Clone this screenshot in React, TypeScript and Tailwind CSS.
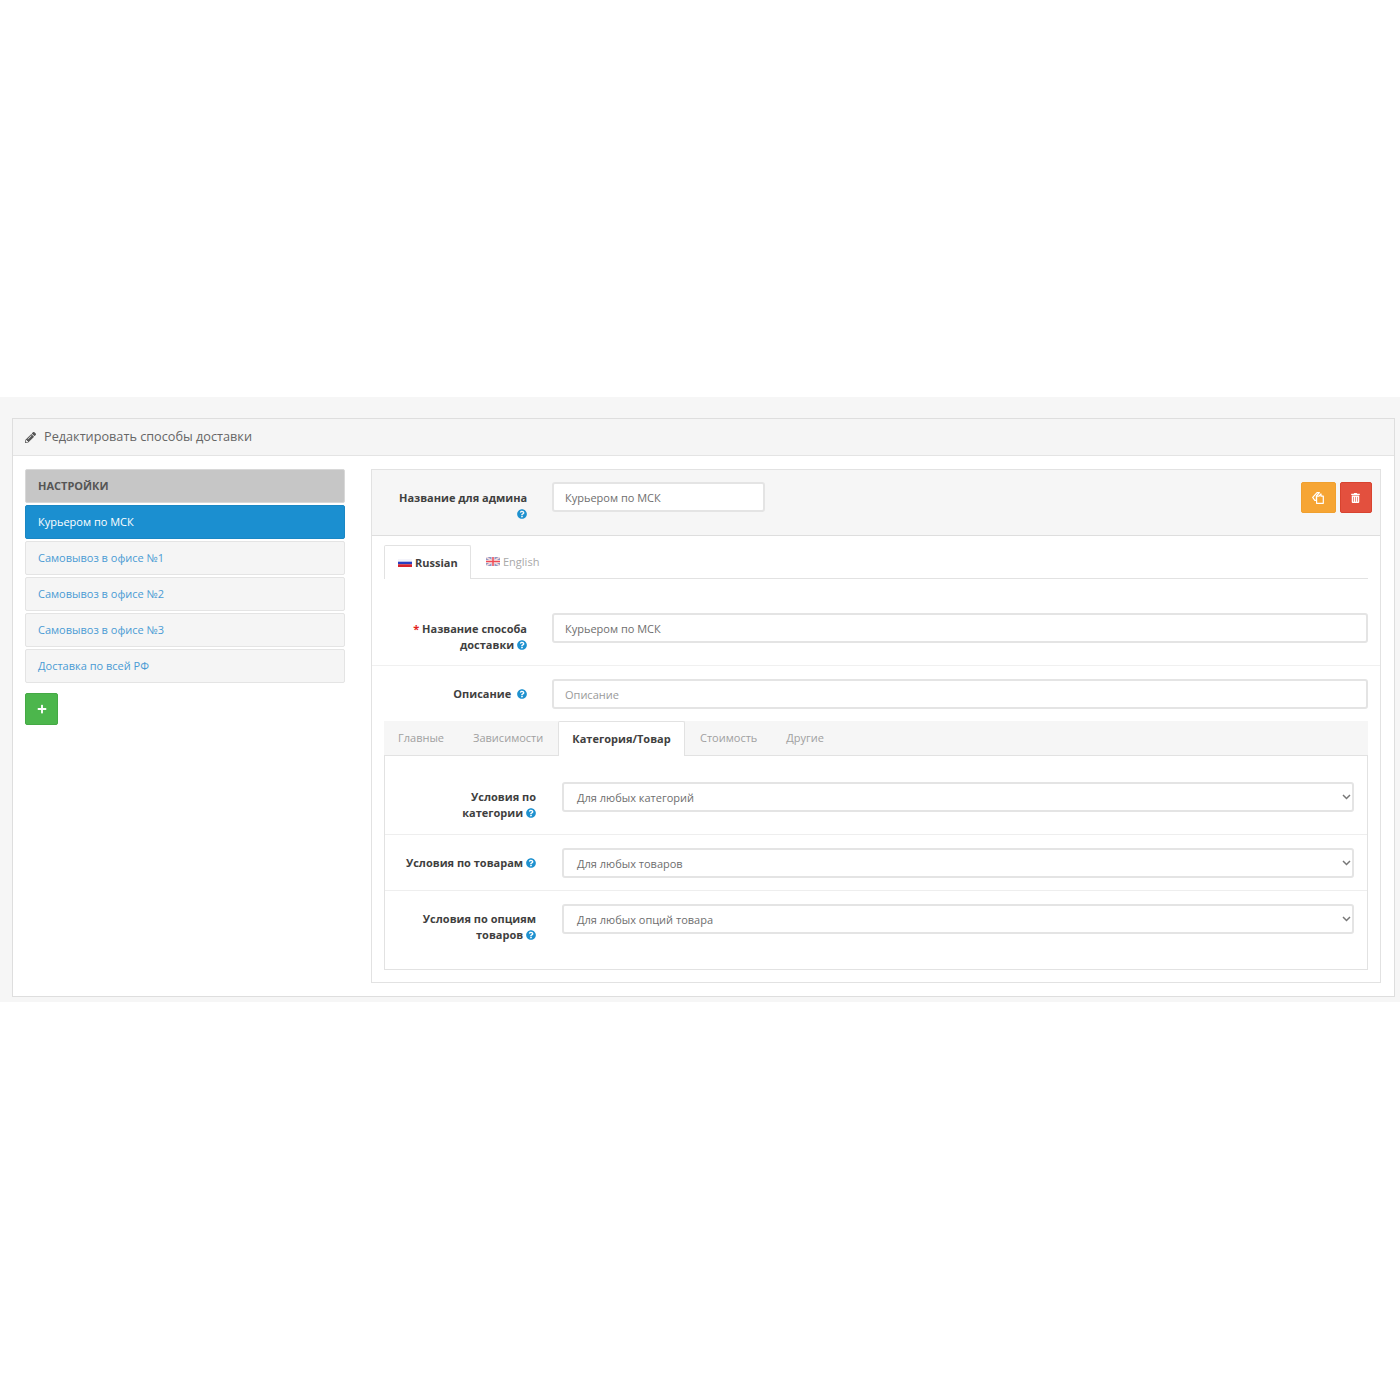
import React from "react";
import { FaPencilAlt, FaQuestionCircle, FaPlus, FaTrashAlt } from "react-icons/fa";

const font = "[font-family:'Open_Sans',sans-serif]";

function Help({ className = "" }: { className?: string }) {
  return <FaQuestionCircle className={`inline-block w-[10px] h-[10px] text-[#1e91cf] align-[-1px] ${className}`} />;
}

function RuFlag() {
  return (
    <svg width="14" height="8" viewBox="0 0 14 8" className="inline-block">
      <rect width="14" height="2.7" fill="#f4f4fa" />
      <rect y="2.7" width="14" height="2.6" fill="#2a3fc0" />
      <rect y="5.3" width="14" height="2.7" fill="#d8232a" />
    </svg>
  );
}

function GbFlag() {
  return (
    <svg width="14" height="9" viewBox="0 0 14 9" className="inline-block">
      <rect width="14" height="9" fill="#8d96c6" />
      <path d="M0 0L14 9M14 0L0 9" stroke="#f3dada" strokeWidth="1.6" />
      <path d="M7 0V9M0 4.5H14" stroke="#f6eeee" strokeWidth="3" />
      <path d="M7 0V9M0 4.5H14" stroke="#ee4a55" strokeWidth="1.5" />
    </svg>
  );
}

function CopyIcon() {
  return (
    <svg width="12" height="12" viewBox="0 0 12 12" fill="none" stroke="#fff" strokeWidth="1.2" strokeLinejoin="round">
      <path d="M0.7 5.4L5 0.7H7.4L4.4 4V8.4H2.8Z" />
      <path d="M4.6 4.2H7L9 1.9V4.2H11.3V11.3H4.6Z" />
    </svg>
  );
}

function SideItem({ children, active }: { children: React.ReactNode; active?: boolean }) {
  return (
    <div
      className={
        active
          ? "h-[34px] flex items-center pl-[12px] text-[11px] text-white bg-[#1b8fd0] border border-[#1a87c4] rounded-[2px]"
          : "h-[34px] flex items-center pl-[12px] text-[11px] text-[#4a9bd4] bg-[#f5f5f5] border border-[#e4e4e4] rounded-[2px]"
      }
    >
      {children}
    </div>
  );
}

function TextInput({ value, placeholder, className = "" }: { value?: string; placeholder?: string; className?: string }) {
  return (
    <input
      readOnly
      value={value ?? ""}
      placeholder={placeholder}
      className={`h-[30px] border-2 border-[#e4e4e4] rounded-[3px] bg-white pl-[11px] text-[11px] text-[#6e6e6e] placeholder:text-[#9a9a9a] outline-none ${className}`}
    />
  );
}

function Label({ children, width }: { children: React.ReactNode; width: string }) {
  return <div className={`${width} shrink-0 text-right text-[11px] leading-[16px] font-bold text-[#3f3f3f]`}>{children}</div>;
}

function SelectRow({ label, value, className = "" }: { label: React.ReactNode; value: string; className?: string }) {
  return (
    <div className={`flex items-start pl-[14px] pr-[13px] ${className}`}>
      <Label width="w-[137px]">{label}</Label>
      <div className="ml-[26px] flex-1 relative h-[30px]">
        <div className="h-[30px] border-2 border-[#e4e4e4] rounded-[3px] bg-white pl-[13px] pt-[2px] flex items-center text-[11px] text-[#6e6e6e]">
          {value}
        </div>
        <svg width="9" height="6" viewBox="0 0 9 6" className="absolute right-[3px] top-[12px]" fill="none" stroke="#777" strokeWidth="1.5">
          <path d="M1 1l3.5 3.5L8 1" />
        </svg>
      </div>
    </div>
  );
}

export default function App() {
  return (
    <div className={`min-h-[1400px] bg-white pt-[397px] ${font}`}>
      <div className="bg-[#f6f6f6] pt-[21px] pb-[5px] pl-[12px] pr-[5px]">
        <div className="border border-[#dedede] bg-white">
          <div className="h-[37px] bg-[#f5f5f5] border-b border-[#e4e4e4] flex items-center pl-[12px] text-[12.7px] text-[#666]">
            <FaPencilAlt className="w-[11px] h-[11px] text-[#555] mr-[8px]" />
            <span>Редактировать способы доставки</span>
          </div>
          <div className="flex items-start pt-[13px] pb-[13px] pl-[12px] pr-[13px]">
            <div className="w-[320px] shrink-0 mr-[26px] flex flex-col">
              <div className="h-[34px] flex items-center pl-[12px] mb-[2px] text-[11px] font-bold text-[#555] bg-[#c6c6c6] border border-[#d8d8d8] rounded-[2px]">
                НАСТРОЙКИ
              </div>
              <div className="flex flex-col gap-[2px]">
                <SideItem active>Курьером по МСК</SideItem>
                <SideItem>Самовывоз в офисе №1</SideItem>
                <SideItem>Самовывоз в офисе №2</SideItem>
                <SideItem>Самовывоз в офисе №3</SideItem>
                <SideItem>Доставка по всей РФ</SideItem>
              </div>
              <button className="mt-[10px] w-[33px] h-[32px] bg-[#4cb64c] border border-[#45a945] rounded-[2px] flex items-center justify-center">
                <FaPlus className="w-[10px] h-[10px] text-white" />
              </button>
            </div>

            <div className="flex-1 border border-[#e2e2e2] pb-[12px]">
              <div className="h-[66px] bg-[#f6f6f6] border-b border-[#dedede] flex items-start pl-[27px] pr-[8px] pt-[12px]">
                <Label width="w-[128px] pt-[8px] whitespace-nowrap">
                  Название для админа
                  <br />
                  <Help />
                </Label>
                <TextInput value="Курьером по МСК" className="ml-[25px] w-[213px]" />
                <div className="ml-auto flex gap-[4px]">
                  <button className="w-[35px] h-[31px] bg-[#f6a534] border border-[#f0a02f] rounded-[2px] flex items-center justify-center pr-[2px]">
                    <CopyIcon />
                  </button>
                  <button className="w-[32px] h-[31px] bg-[#e3503e] border border-[#d8432f] rounded-[2px] flex items-center justify-center pr-[2px]">
                    <FaTrashAlt className="w-[9px] h-[10px] text-white" />
                  </button>
                </div>
              </div>

              <div className="mt-[9px] ml-[12px] mr-[12px] h-[34px] border-b border-[#e2e2e2] flex items-stretch text-[11px]">
                <div className="w-[87px] h-[34px] border border-b-0 border-[#e2e2e2] bg-white rounded-t-[2px] flex items-center pl-[13px] font-bold text-[#3f3f3f]">
                  <RuFlag />
                  <span className="ml-[3px] pt-[1px]">Russian</span>
                </div>
                <div className="flex items-center pl-[15px] text-[#a8a8a8]">
                  <GbFlag />
                  <span className="ml-[3px] pt-[2px]">English</span>
                </div>
              </div>

              <div className="mt-[34px] flex items-start pl-[27px] pr-[12px] pb-[12px] border-b border-[#f0f0f0]">
                <Label width="w-[128px] pt-[8px]">
                  <span className="text-[#e3211c]">* </span>Название способа
                  <br />
                  доставки <Help />
                </Label>
                <TextInput value="Курьером по МСК" className="ml-[25px] flex-1" />
              </div>

              <div className="mt-[13px] flex items-center pl-[27px] pr-[12px]">
                <Label width="w-[128px]">
                  Описание <Help className="ml-[3px]" />
                </Label>
                <TextInput placeholder="Описание" className="ml-[25px] flex-1" />
              </div>

              <div className="mt-[12px] ml-[12px] mr-[12px]">
                <div className="h-[35px] bg-[#f6f6f6] border-b border-[#e2e2e2] flex items-stretch text-[11px] text-[#a0a0a0]">
                  <div className="flex items-center pl-[14px] w-[174px]">
                    <span>Главные</span>
                    <span className="ml-[29px]">Зависимости</span>
                  </div>
                  <div className="w-[127px] h-[35px] bg-white border border-b-0 border-[#e2e2e2] rounded-t-[2px] flex items-center justify-center font-bold text-[#3f3f3f]">
                    Категория/Товар
                  </div>
                  <div className="flex items-center pl-[15px]">
                    <span>Стоимость</span>
                    <span className="ml-[29px]">Другие</span>
                  </div>
                </div>
                <div className="h-[214px] border border-t-0 border-[#e2e2e2] flex flex-col">
                  <SelectRow
                    className="pt-[26px] h-[79px] shrink-0 border-b border-[#eeeeee]"
                    label={
                      <>
                        <span className="block pt-[7px]">Условия по</span>
                        категории <Help />
                      </>
                    }
                    value="Для любых категорий"
                  />
                  <SelectRow
                    className="pt-[13px] h-[56px] shrink-0 border-b border-[#eeeeee]"
                    label={
                      <span className="block pt-[7px]">
                        Условия по товарам <Help />
                      </span>
                    }
                    value="Для любых товаров"
                  />
                  <SelectRow
                    className="pt-[13px]"
                    label={
                      <>
                        <span className="block pt-[7px]">Условия по опциям</span>
                        товаров <Help />
                      </>
                    }
                    value="Для любых опций товара"
                  />
                </div>
              </div>
            </div>
          </div>
        </div>
      </div>
    </div>
  );
}
